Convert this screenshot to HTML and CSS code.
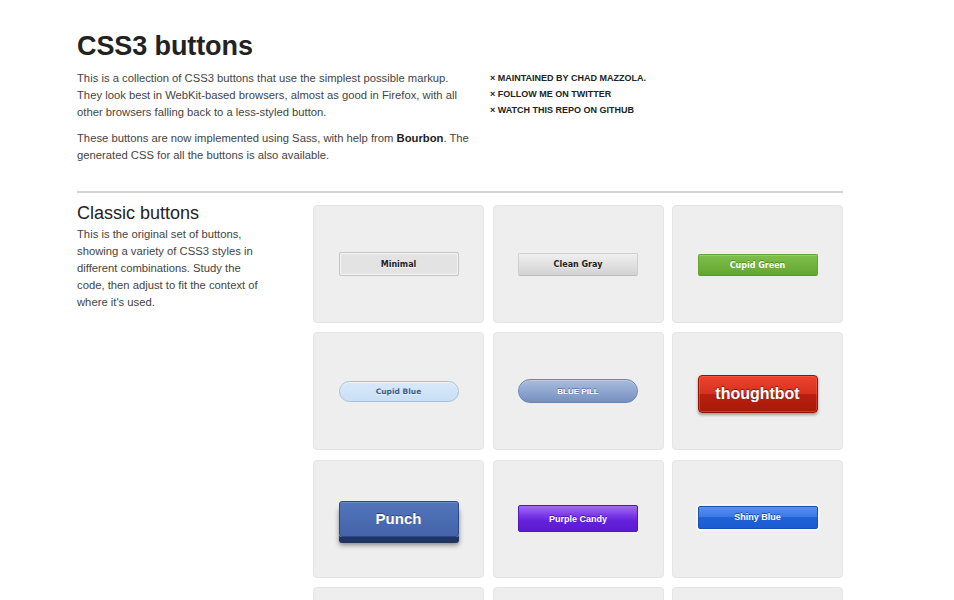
FILE: index.html
```html
<!DOCTYPE html>
<html>
<head>
<meta charset="utf-8">
<title>CSS3 buttons</title>
<link rel="stylesheet" href="styles.css">
</head>
<body>
<div class="page">
  <header class="intro">
    <div class="intro-main">
      <h1 class="title">CSS3 buttons</h1>
      <p class="lead">This is a collection of CSS3 buttons that use the simplest possible markup. They look best in WebKit-based browsers, almost as good in Firefox, with all other browsers falling back to a less-styled button.</p>
      <p class="lead">These buttons are now implemented using Sass, with help from <strong>Bourbon</strong>. The generated CSS for all the buttons is also available.</p>
    </div>
    <ul class="links">
      <li>&times; Maintained by Chad Mazzola.</li>
      <li>&times; Follow me on Twitter</li>
      <li>&times; Watch this repo on GitHub</li>
    </ul>
  </header>
  <hr class="rule">
  <section class="group">
    <div class="group-info">
      <h2 class="group-title">Classic buttons</h2>
      <p class="group-desc">This is the original set of buttons, showing a variety of CSS3 styles in different combinations. Study the code, then adjust to fit the context of where it's used.</p>
    </div>
    <div class="grid">
      <div class="cell"><button class="btn minimal">Minimal</button></div>
      <div class="cell"><button class="btn clean-gray">Clean Gray</button></div>
      <div class="cell"><button class="btn cupid-green">Cupid Green</button></div>
      <div class="cell"><button class="btn cupid-blue">Cupid Blue</button></div>
      <div class="cell"><button class="btn blue-pill">Blue Pill</button></div>
      <div class="cell"><button class="btn thoughtbot">thoughtbot</button></div>
      <div class="cell"><button class="btn punch">Punch</button></div>
      <div class="cell"><button class="btn purple-candy">Purple Candy</button></div>
      <div class="cell"><button class="btn shiny-blue">Shiny Blue</button></div>
      <div class="cell"></div>
      <div class="cell"></div>
      <div class="cell"></div>
    </div>
  </section>
</div>
</body>
</html>
```
FILE: styles.css
```css
html, body {
  margin: 0;
  padding: 0;
  background: #ffffff;
}
body {
  font-family: "Liberation Sans", Arial, sans-serif;
  color: #444;
}
.page {
  width: 766px;
  padding: 31px 0 40px 77px;
}
.intro {
  display: flex;
  gap: 19px;
}
.intro-main {
  width: 394px;
}
.title {
  margin: 0 0 8px;
  font-size: 27px;
  line-height: 31px;
  font-weight: bold;
  color: #222;
  letter-spacing: -0.1px;
}
.lead {
  margin: 0 0 9px;
  font-size: 11.25px;
  line-height: 17px;
  color: #444;
}
.lead strong {
  color: #222;
}
.links {
  list-style: none;
  margin: 39px 0 0;
  padding: 0;
  font-size: 9px;
  line-height: 16px;
  font-weight: bold;
  text-transform: uppercase;
  color: #222;
}
.rule {
  margin: 18px 0 12px;
  border: 0;
  border-top: 2px solid #d4d4d4;
  height: 0;
}
.group {
  display: grid;
  grid-template-columns: 236px 1fr;
}
.group-title {
  margin: -2px 0 0;
  font-size: 18px;
  line-height: 20px;
  font-weight: normal;
  color: #222;
}
.group-desc {
  margin: 3px 0 0;
  width: 188px;
  font-size: 11.25px;
  line-height: 17px;
  color: #444;
}
.grid {
  display: grid;
  grid-template-columns: repeat(3, 1fr);
  column-gap: 8.5px;
  row-gap: 9.3px;
}
.cell {
  box-sizing: border-box;
  height: 118px;
  background: #eeeeee;
  border: 1px solid #e4e4e4;
  border-radius: 4px;
  display: flex;
  align-items: center;
  justify-content: center;
}
.btn {
  width: 120px;
  margin: 0;
  padding: 0;
  font-family: "DejaVu Sans", Verdana, sans-serif;
  font-weight: bold;
  font-size: 8px;
  cursor: pointer;
}
.minimal {
  height: 24px;
  background: #e3e3e3;
  border: 1px solid #c4c4c4;
  border-radius: 2px;
  box-shadow: inset 0 0 1px 1px #f6f6f6;
  color: #222;
  text-shadow: 0 1px 0 #fff;
}
.clean-gray {
  height: 23px;
  background: linear-gradient(#f0f0f0, #d2d2d2);
  border: 1px solid #cfcfcf;
  border-bottom-color: #bbb;
  border-radius: 2px;
  color: #222;
  text-shadow: 0 1px 0 #eee;
}
.cupid-green {
  height: 22px;
  margin-top: 2px;
  background: linear-gradient(#7fbf4d, #63a62f);
  border: 1px solid #63a62f;
  border-bottom-color: #5b992b;
  border-radius: 2px;
  box-shadow: inset 0 1px 0 0 #96ca6d;
  color: #fff;
  text-shadow: 0 -1px 0 #4c9021;
}
.cupid-blue {
  height: 21px;
  background: linear-gradient(#d9e9fa, #c9dff5);
  border: 1px solid #a6c0dc;
  border-radius: 11px;
  box-shadow: inset 0 1px 0 0 #eef5fd;
  color: #3c5e86;
  font-size: 7.5px;
  text-shadow: 0 1px 0 #e6f0fb;
}
.blue-pill {
  height: 24px;
  background: linear-gradient(#a9bcdd, #7590c0);
  border: 1px solid #6c86b2;
  border-radius: 12px;
  box-shadow: inset 0 1px 0 0 #bccbe6;
  color: #fff;
  font-family: "Liberation Sans", Arial, sans-serif;
  font-size: 8px;
  text-transform: uppercase;
  text-shadow: 0 -1px 0 #5a6f96;
}
.thoughtbot {
  height: 38px;
  margin-top: 6px;
  background: linear-gradient(#ee432e 0%, #d5321f 50%, #b9200f 50%, #a8190a 100%);
  border: 1px solid #951100;
  border-radius: 4px;
  box-shadow: inset 0 0 0 1px rgba(255, 115, 100, 0.4), 0 2px 3px rgba(0, 0, 0, 0.35);
  color: #fff;
  font-family: "Liberation Sans", Arial, sans-serif;
  font-size: 16px;
  text-shadow: 0 -1px 1px rgba(0, 0, 0, 0.5);
}
.punch {
  height: 36px;
  background: linear-gradient(#5175bb, #4563a8);
  border: 1px solid #2b4a8a;
  border-radius: 3px;
  box-shadow: inset 0 1px 0 0 #6c8cc8, 0 6px 0 0 #1f3461, 0 8px 5px rgba(0, 0, 0, 0.45);
  color: #fff;
  font-family: "Liberation Sans", Arial, sans-serif;
  font-size: 15px;
  text-shadow: 0 -1px 0 #2a3f70;
}
.purple-candy {
  height: 27px;
  background: linear-gradient(#a06ff0 0%, #7a35e6 40%, #6420da 60%, #5b1bd2 100%);
  border: 1px solid #5216c0;
  border-radius: 2px;
  color: #fff;
  font-family: "Liberation Sans", Arial, sans-serif;
  font-size: 9px;
  text-shadow: 0 -1px 0 #4a14a8;
}
.shiny-blue {
  height: 23px;
  margin-top: -3px;
  background: linear-gradient(#5592ec 0%, #3a78e4 50%, #2062d8 50%, #1c5bd3 100%);
  border: 1px solid #1b4fb4;
  border-radius: 2px;
  box-shadow: 0 0 0 2px #f6f6f6;
  color: #fff;
  font-family: "Liberation Sans", Arial, sans-serif;
  font-size: 9px;
  text-shadow: 0 -1px 0 #1a44a0;
}
```
